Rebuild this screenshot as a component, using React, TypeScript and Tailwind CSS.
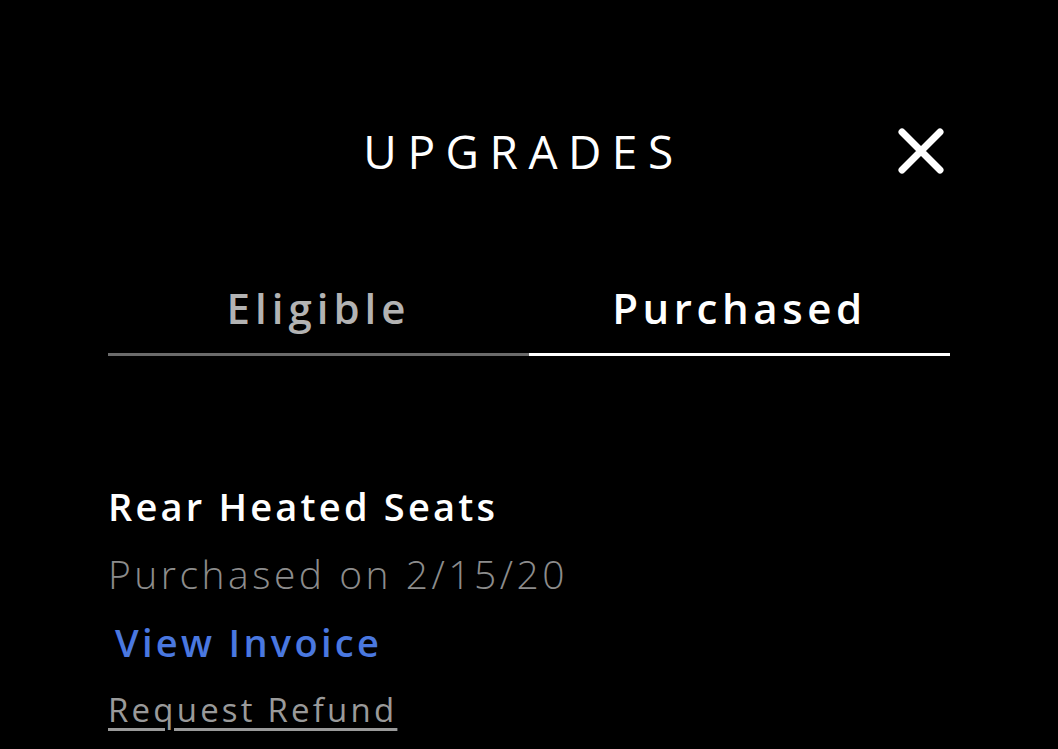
export default function App() {
  return (
    <div className="min-h-[749px] w-full bg-black text-white" style={{ fontFamily: "'Open Sans', Lato, sans-serif" }}>
      <div className="mx-auto w-[842px] pt-[118px]">
        {/* Header */}
        <div className="relative flex h-[66px] items-center justify-center">
          <h1 className="pr-[11px] text-[46px] font-normal tracking-[10.5px] leading-none">UPGRADES</h1>
          <button className="absolute right-[4px] top-[8px] h-[50px] w-[50px] cursor-pointer">
            <svg viewBox="0 0 50 50" className="h-full w-full">
              <path d="M6 6 L44 44 M44 6 L6 44" stroke="white" strokeWidth="7" strokeLinecap="round" />
            </svg>
          </button>
        </div>

        {/* Tabs */}
        <div className="mt-[96px] grid grid-cols-2">
          <button className="h-[76px] border-b-[3px] border-[#6b6b6b] pb-[18px] text-[42px] font-semibold tracking-[5px] leading-none text-[#b3b3b3]">
            Eligible
          </button>
          <button className="h-[76px] border-b-[3px] border-white pb-[18px] text-[42px] font-semibold tracking-[4.6px] leading-none text-white">
            Purchased
          </button>
        </div>

        {/* Item */}
        <div className="mt-[116px] flex flex-col items-start">
          <div className="text-[38px] font-semibold tracking-[3.2px] leading-[68px]">Rear Heated Seats</div>
          <div className="text-[39px] font-light tracking-[3.5px] leading-[68px] text-[#8c8c8c]">Purchased on 2/15/20</div>
          <a className="ml-[7px] text-[38px] font-semibold tracking-[3.3px] leading-[68px] text-[#4a78e0]">View Invoice</a>
          <a className="text-[33px] tracking-[3.2px] leading-[68px] text-[#9a9a9a] underline underline-offset-[6px]">Request Refund</a>
        </div>
      </div>
    </div>
  );
}
